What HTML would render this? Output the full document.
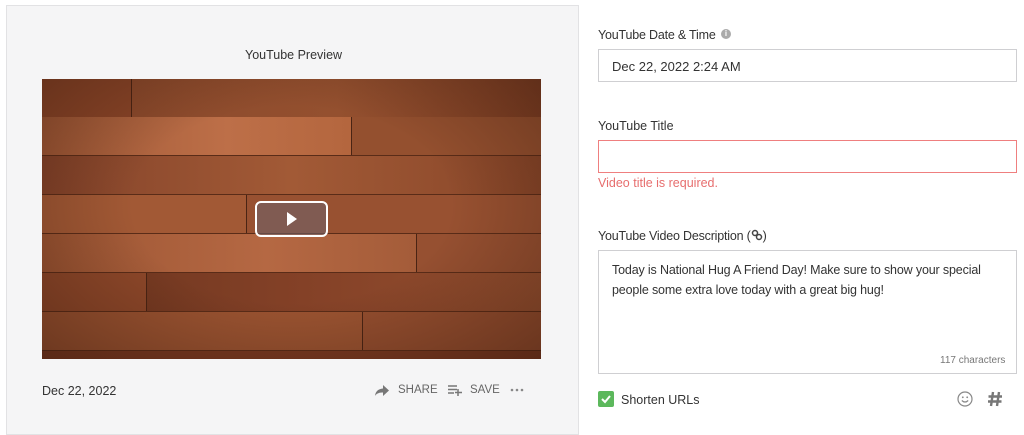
<!DOCTYPE html>
<html><head><style>
*{margin:0;padding:0;box-sizing:border-box}
body{width:1024px;height:422px;background:#fff;font-family:"Liberation Sans",sans-serif;color:#333;position:relative;overflow:hidden}
.a{position:absolute}
.panel{left:6px;top:5px;width:573px;height:430px;background:#f5f5f6;border:1px solid #e2e2e4}
.vid{left:42px;top:79px;width:499px;height:280px;overflow:hidden;background:#9a4e2c}
.row{position:absolute;left:0;width:499px;height:39px;border-bottom:1px solid #5a2c18}
.p{position:absolute;top:0;height:38px;border-right:1px solid #4a2414}
.lbl{font-size:12.5px;color:#333}
.inp{border:1px solid #cfcfd2;background:#fff}
</style></head><body>
<div class="a panel"></div>
<div class="a lbl" style="left:245px;top:48px;">YouTube Preview</div>
<div class="a vid">
 <div class="row" style="top:0;height:38px"><div class="p" style="left:0;width:90px;background:#8a4528"></div><div class="p" style="left:90px;width:409px;background:linear-gradient(90deg,#8c4a2c,#94502f 50%,#7e3f24);border-right:0"></div></div>
 <div class="row" style="top:38px"><div class="p" style="left:0;width:310px;background:linear-gradient(90deg,#9f5836,#bd6f48 60%,#b4663e)"></div><div class="p" style="left:310px;width:189px;background:#94502f;border-right:0"></div></div>
 <div class="row" style="top:77px"><div class="p" style="left:0;width:499px;background:linear-gradient(90deg,#84432a,#a25a36 50%,#884629);border-right:0"></div></div>
 <div class="row" style="top:116px"><div class="p" style="left:0;width:205px;background:#a25935"></div><div class="p" style="left:205px;width:294px;background:#985131;border-right:0"></div></div>
 <div class="row" style="top:155px"><div class="p" style="left:0;width:375px;background:linear-gradient(90deg,#9c5533,#b56843 60%,#a45c39)"></div><div class="p" style="left:375px;width:124px;background:#965031;border-right:0"></div></div>
 <div class="row" style="top:194px"><div class="p" style="left:0;width:105px;background:#8e482a"></div><div class="p" style="left:105px;width:394px;background:linear-gradient(90deg,#763a22,#844127 40%,#955030);border-right:0"></div></div>
 <div class="row" style="top:233px"><div class="p" style="left:0;width:321px;background:#9a5331"></div><div class="p" style="left:321px;width:178px;background:#944e2f;border-right:0"></div></div>
 <div class="row" style="top:272px;border:0"><div class="p" style="left:0;width:499px;background:#7a3a22;border:0"></div></div>
 <div class="a" style="left:0;top:0;width:499px;height:280px;background:radial-gradient(ellipse at 50% 45%,rgba(0,0,0,0) 45%,rgba(40,15,5,.4) 100%)"></div>
 <div class="a" style="left:213px;top:122px;width:73px;height:36px;border:2px solid #fff;border-radius:6px;background:rgba(110,100,110,.55)"></div>
 <svg class="a" style="left:244px;top:132px" width="12" height="16"><path d="M1 1L11 8L1 15Z" fill="#fff"/></svg>
</div>
<div class="a lbl" style="left:42px;top:384px;">Dec 22, 2022</div>
<svg class="a" style="left:374px;top:384px" width="16" height="13"><path d="M9 1L15 6.5L9 12V8.5C5 8.5 2.5 9.5 1 12C1.5 7.5 4 5 9 4.5Z" fill="#777"/></svg>
<div class="a" style="left:398px;top:384px;font-size:11.5px;color:#666">SHARE</div>
<svg class="a" style="left:447px;top:383px" width="16" height="14"><path d="M1 3H10M1 6.5H10M1 10H7M11 6V13M8 9.5H15" stroke="#777" stroke-width="1.5" fill="none"/></svg>
<div class="a" style="left:470px;top:384px;font-size:11.5px;color:#666">SAVE</div>
<svg class="a" style="left:510px;top:388px" width="16" height="4"><circle cx="2" cy="2" r="1.3" fill="#888"/><circle cx="7" cy="2" r="1.3" fill="#888"/><circle cx="12" cy="2" r="1.3" fill="#888"/></svg>

<div class="a lbl" style="left:598px;top:28px;letter-spacing:-0.2px">YouTube Date &amp; Time</div>
<div class="a" style="left:721px;top:29px;width:10px;height:10px;border-radius:50%;background:#aaa;color:#fff;font-size:8px;text-align:center;line-height:10px;font-weight:bold">i</div>
<div class="a inp" style="left:598px;top:49px;width:419px;height:33px;"></div>
<div class="a" style="left:612px;top:59px;font-size:13px;color:#333">Dec 22, 2022 2:24 AM</div>
<div class="a lbl" style="left:598px;top:119px;">YouTube Title</div>
<div class="a" style="left:598px;top:140px;width:419px;height:33px;border:1px solid #ef7f7f;background:#fff"></div>
<div class="a" style="left:598px;top:176px;font-size:12.5px;color:#e76e6e">Video title is required.</div>
<div class="a lbl" style="left:598px;top:229px;letter-spacing:-0.2px">YouTube Video Description (<svg width="12" height="12" style="vertical-align:-1px"><circle cx="4" cy="4" r="2.5" stroke="#444" stroke-width="1.5" fill="none"/><circle cx="8" cy="8" r="2.5" stroke="#444" stroke-width="1.5" fill="none"/></svg>)</div>
<div class="a inp" style="left:598px;top:250px;width:419px;height:124px;"></div>
<div class="a" style="left:612px;top:260px;width:390px;font-size:12.5px;line-height:20px;color:#333;letter-spacing:-0.15px">Today is National Hug A Friend Day! Make sure to show your special people some extra love today with a great big hug!</div>
<div class="a" style="left:940px;top:355px;font-size:10px;color:#777">117 characters</div>
<div class="a" style="left:598px;top:391px;width:16px;height:16px;border-radius:2px;background:#5cb85c"></div>
<svg class="a" style="left:600px;top:393px" width="12" height="12"><path d="M2 6L5 9L10 3" stroke="#fff" stroke-width="2" fill="none"/></svg>
<div class="a" style="left:621px;top:393px;font-size:12.5px;color:#333">Shorten URLs</div>
<svg class="a" style="left:957px;top:391px" width="16" height="16"><circle cx="8" cy="8" r="7" stroke="#888" stroke-width="1.2" fill="none"/><circle cx="5.8" cy="6.3" r=".9" fill="#888"/><circle cx="10.2" cy="6.3" r=".9" fill="#888"/><path d="M4.8 9.5Q8 12.5 11.2 9.5" stroke="#888" stroke-width="1.2" fill="none"/></svg>
<svg class="a" style="left:987px;top:391px" width="16" height="16"><path d="M6 1L4 15M12 1L10 15M1.5 5.5H15M1 10.5H14.5" stroke="#777" stroke-width="2.4" fill="none"/></svg>
</body></html>
